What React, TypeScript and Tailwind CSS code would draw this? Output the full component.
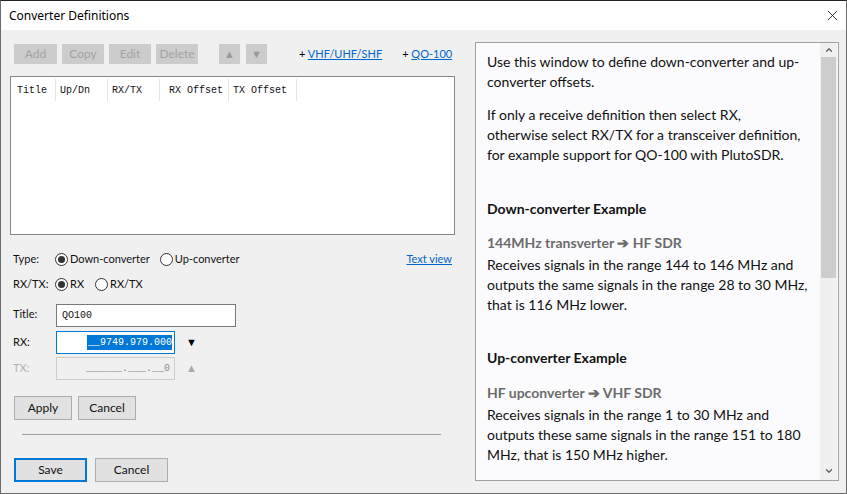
import { ChevronUp, ChevronDown, X } from "lucide-react";

const ui = { fontFamily: 'Lato, "Noto Sans", sans-serif' };
const mono = { fontFamily: '"Liberation Mono", "DejaVu Sans Mono", monospace' };
const help = { fontFamily: 'Lato, "Noto Sans", sans-serif' };

function GrayBtn({ label, w }: { label: string; w: string }) {
  return (
    <div className={`${w} h-[20px] bg-[#cccccc] text-[#a3a3a3] text-[12px] flex items-center justify-center`}>
      {label}
    </div>
  );
}

function Radio({ on }: { on?: boolean }) {
  return (
    <span className="w-[13px] h-[13px] rounded-full border border-[#333] bg-white flex items-center justify-center mr-[2px]">
      {on && <span className="w-[7px] h-[7px] rounded-full bg-[#333]" />}
    </span>
  );
}

function Btn({ label, w, focus }: { label: string; w: string; focus?: boolean }) {
  return (
    <div
      className={`${w} h-[24px] bg-[#e1e1e1] text-[12px] text-[#111] flex items-center justify-center ${
        focus ? "border-2 border-[#0078d7]" : "border border-[#adadad]"
      }`}
    >
      {label}
    </div>
  );
}

const cols = [
  { t: "Title", w: "w-[43px]" },
  { t: "Up/Dn", w: "w-[52px]" },
  { t: "RX/TX", w: "w-[52px]" },
  { t: "RX Offset", w: "w-[69px]", pl: "pl-[9px]" },
  { t: "TX Offset", w: "w-[68px]" },
];

export default function App() {
  return (
    <div className="w-[847px] h-[494px] flex flex-col border border-[#6b6b6b] border-t-[#222] bg-[#f0f0f0] overflow-hidden" style={ui}>
      {/* title bar */}
      <div className="h-[29px] bg-white flex items-center justify-between pl-[8px] pr-[4px] shrink-0">
        <span className="text-[12px] text-black" style={{ fontFamily: '"Noto Sans", sans-serif' }}>
          Converter Definitions
        </span>
        <X size={17} strokeWidth={1.2} className="text-[#111] mr-[1px]" />
      </div>

      <div className="flex flex-1">
        {/* left side */}
        <div className="w-[464px] flex flex-col pl-[9px]">
          <div className="flex items-center mt-[14px] pl-[4px] h-[20px] whitespace-nowrap">
            <div className="flex gap-[5px]">
              <GrayBtn label="Add" w="w-[43px]" />
              <GrayBtn label="Copy" w="w-[42px]" />
              <GrayBtn label="Edit" w="w-[42px]" />
              <GrayBtn label="Delete" w="w-[42px]" />
            </div>
            <div className="flex gap-[6px] ml-[21px]">
              <div className="w-[21px] h-[20px] bg-[#cccccc] text-[#9a9a9a] text-[11px] flex items-center justify-center">▲</div>
              <div className="w-[21px] h-[20px] bg-[#cccccc] text-[#9a9a9a] text-[11px] flex items-center justify-center">▼</div>
            </div>
            <span className="ml-[32px] text-[11px] text-black">
              + <span className="text-[#0066cc] underline">VHF/UHF/SHF</span>
            </span>
            <span className="ml-[20px] text-[11px] text-black">
              + <span className="text-[#0066cc] underline">QO-100</span>
            </span>
          </div>

          {/* list */}
          <div className="mt-[12px] w-[445px] h-[159px] bg-white border border-[#828790]">
            <div className="flex h-[22px] mt-[2px] pl-[2px] text-[10px] text-[#111] whitespace-nowrap" style={mono}>
              {cols.map((c) => (
                <div key={c.t} className={`${c.w} ${c.pl ?? "pl-[4px]"} border-r border-[#e5e5e5] flex items-center`}>
                  {c.t}
                </div>
              ))}
            </div>
          </div>

          {/* type */}
          <div className="flex items-center mt-[16px] h-[16px] w-[445px] text-[11px] text-[#111]">
            <span className="w-[45px] pl-[3px]">Type:</span>
            <Radio on />
            <span>Down-converter</span>
            <span className="ml-[10px] flex items-center">
              <Radio />
              <span>Up-converter</span>
            </span>
            <span className="ml-auto mr-[3px] text-[#0066cc] underline">Text view</span>
          </div>
          <div className="flex items-center mt-[9px] h-[16px] text-[11px] text-[#111]">
            <span className="w-[45px] pl-[3px]">RX/TX:</span>
            <Radio on />
            <span>RX</span>
            <span className="ml-[11px] flex items-center">
              <Radio />
              <span>RX/TX</span>
            </span>
          </div>

          {/* title */}
          <div className="flex items-center mt-[12px] text-[11px] text-[#111]">
            <span className="w-[46px] pl-[3px] -mt-[2px]">Title:</span>
            <div className="w-[180px] h-[23px] bg-white border border-[#7a7a7a] flex items-center pl-[5px] text-[10px]" style={mono}>
              QO100
            </div>
          </div>
          <div className="flex items-center mt-[4px] text-[11px] text-[#111]">
            <span className="w-[46px] pl-[3px]">RX:</span>
            <div className="w-[119px] h-[23px] bg-white border border-[#0078d7] flex items-center justify-end pr-[2px] text-[10px]" style={mono}>
              <span className="bg-[#0078d7] text-white leading-[15px] pl-[1px]">__9749.979.000</span>
            </div>
            <span className="ml-[11px] text-[11px] text-black">▼</span>
          </div>
          <div className="flex items-center mt-[3px] text-[11px] text-[#b0b0b0]">
            <span className="w-[46px] pl-[3px]">TX:</span>
            <div className="w-[119px] h-[23px] bg-[#f0f0f0] border border-[#cccccc] flex items-center justify-end pr-[4px] text-[10px] text-[#8c8c8c]" style={mono}>
              ______.___.__0
            </div>
            <span className="ml-[11px] text-[11px] text-[#a8a8a8]">▲</span>
          </div>

          {/* apply */}
          <div className="flex gap-[6px] mt-[16px] pl-[4px]">
            <Btn label="Apply" w="w-[58px]" />
            <Btn label="Cancel" w="w-[58px]" />
          </div>
          <div className="ml-[12px] mt-[14px] w-[419px] h-px bg-[#a0a0a0]" />
          <div className="flex gap-[8px] mt-[23px] pl-[4px]">
            <Btn label="Save" w="w-[73px]" focus />
            <Btn label="Cancel" w="w-[73px]" />
          </div>
        </div>

        {/* help panel */}
        <div className="ml-[10px] mt-[12px] w-[364px] h-[439px] bg-[#fbfbfd] border border-[#a0a0a0] flex">
          <div className="flex-1 pl-[11px] pr-[2px] pt-[9px] text-[14px] leading-[20px] text-[#111] whitespace-nowrap" style={help}>
            <p>
              Use this window to define down-converter and up-
              <br />
              converter offsets.
            </p>
            <p className="mt-[13px]">
              If only a receive definition then select RX,
              <br />
              otherwise select RX/TX for a transceiver definition,
              <br />
              for example support for QO-100 with PlutoSDR.
            </p>
            <p className="mt-[34px] font-bold">Down-converter Example</p>
            <p className="mt-[14px] font-bold text-[#6b6b6b]">144MHz transverter ➔ HF SDR</p>
            <p className="mt-[2px]">
              Receives signals in the range 144 to 146 MHz and
              <br />
              outputs the same signals in the range 28 to 30 MHz,
              <br />
              that is 116 MHz lower.
            </p>
            <p className="mt-[33px] font-bold">Up-converter Example</p>
            <p className="mt-[15px] font-bold text-[#6b6b6b]">HF upconverter ➔ VHF SDR</p>
            <p className="mt-[2px]">
              Receives signals in the range 1 to 30 MHz and
              <br />
              outputs these same signals in the range 151 to 180
              <br />
              MHz, that is 150 MHz higher.
            </p>
          </div>
          <div className="w-[17px] bg-[#f0f0f0] flex flex-col items-center mr-[1px]">
            <div className="h-[14px] flex items-center justify-center">
              <ChevronUp size={10} strokeWidth={3} className="text-[#606060]" />
            </div>
            <div className="w-[15px] h-[221px] bg-[#cdcdcd]" />
            <div className="flex-1" />
            <div className="h-[18px] flex items-center justify-center">
              <ChevronDown size={10} strokeWidth={3} className="text-[#606060]" />
            </div>
          </div>
        </div>
      </div>
    </div>
  );
}
